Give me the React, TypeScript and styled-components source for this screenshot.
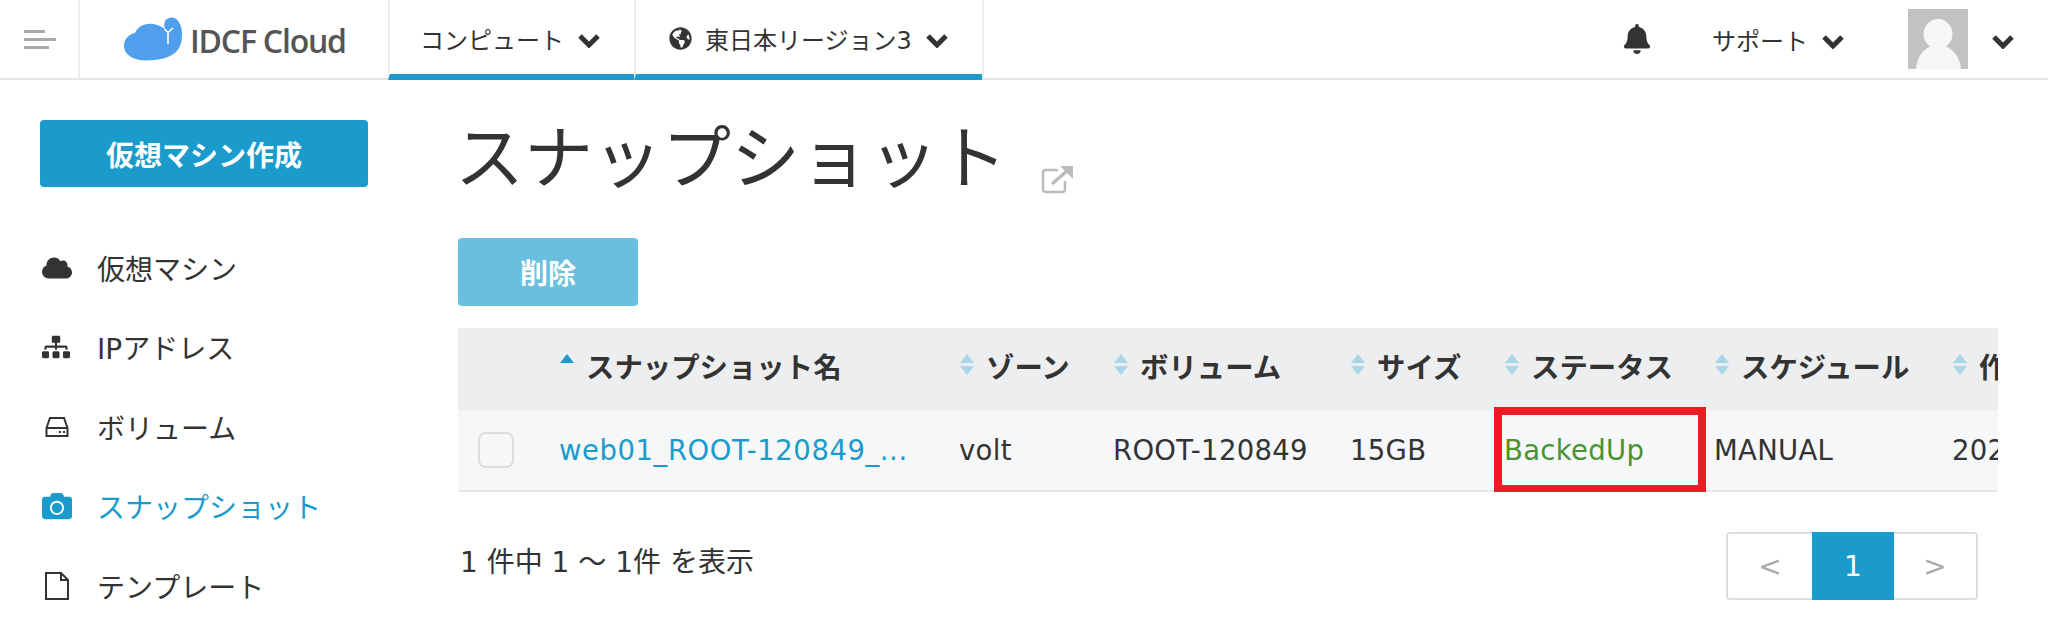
import React from "react";
import styled, { createGlobalStyle } from "styled-components";
import { FaBell, FaCamera, FaCloud, FaGlobeAmericas, FaSitemap } from "react-icons/fa";

const FONT = `"DejaVu Sans", "Noto Sans CJK JP", sans-serif`;
const BLUE = "#1a9bcb";
const COLS = "87px 400px 154px 237px 154px 210px 238px 200px";

const Global = createGlobalStyle`
  html, body { margin: 0; padding: 0; background: #fff; }
  body { font-family: ${FONT}; color: #333; width: 2048px; height: 630px; overflow: hidden; }
  * { box-sizing: border-box; }
`;

const Header = styled.header`
  display: flex;
  align-items: stretch;
  height: 80px;
  border-bottom: 2px solid #e6e6e6;
`;
const MenuCell = styled.div`
  width: 80px;
  border-right: 2px solid #eee;
  display: flex;
  flex-direction: column;
  justify-content: center;
  gap: 5px;
  padding-left: 24px;
`;
const MenuLine = styled.span<{ $w: number }>`
  display: block;
  height: 3px;
  width: ${(p) => p.$w}px;
  background: #aaa;
`;
const LogoCell = styled.div`
  width: 308px;
  display: flex;
  align-items: center;
  padding-left: 44px;
  gap: 8px;
`;
const LogoText = styled.span`
  font-family: "Open Sans", sans-serif;
  font-size: 32px;
  font-weight: 600;
  letter-spacing: -1.2px;
  color: #555;
  margin-top: 2px;
`;
const Tab = styled.div<{ $w: number; $pad: number }>`
  width: ${(p) => p.$w}px;
  height: 80px;
  border-left: 2px solid #eee;
  border-bottom: 6px solid ${BLUE};
  display: flex;
  align-items: center;
  padding-left: ${(p) => p.$pad}px;
  padding-top: 2px;
  font-size: 24px;
  gap: 13px;
`;
const Spacer = styled.div`
  flex: 1;
  border-left: 2px solid #eee;
`;
const RightCluster = styled.div`
  display: flex;
  align-items: center;
  padding-right: 33px;
  font-size: 24px;
`;
const Support = styled.div`
  display: flex;
  align-items: center;
  gap: 13px;
  margin-left: 60px;
`;
const Avatar = styled.svg`
  width: 60px;
  height: 60px;
  margin-left: 63px;
  margin-right: 23px;
  display: block;
`;
const ChevronSvg = styled.svg`
  width: 24px;
  height: 15px;
  flex: none;
  margin-top: 5px;
`;

const Body = styled.div`
  display: flex;
`;
const Sidebar = styled.aside`
  width: 458px;
  flex: none;
  padding: 40px 0 0 40px;
`;
const CreateButton = styled.div`
  width: 328px;
  height: 67px;
  background: ${BLUE};
  border-radius: 4px;
  color: #fff;
  font-weight: 700;
  font-size: 28px;
  display: flex;
  align-items: center;
  justify-content: center;
`;
const Nav = styled.nav`
  margin-top: 41px;
`;
const NavItem = styled.div<{ $active?: boolean }>`
  height: 79.5px;
  display: flex;
  align-items: center;
  font-size: 28px;
  color: ${(p) => (p.$active ? BLUE : "#333")};
`;
const NavIcon = styled.span`
  width: 57px;
  padding-left: 2px;
  display: flex;
  font-size: 30px;
`;
const LineIcon = styled.svg`
  margin-left: 3px;
  display: block;
`;

const Main = styled.main`
  width: 1540px;
`;
const TitleRow = styled.div`
  height: 158px;
  display: flex;
  align-items: flex-start;
`;
const Title = styled.h1`
  margin: 33px 0 0 -3px;
  font-size: 69px;
  line-height: 92px;
  font-weight: 400;
`;
const TitleLink = styled.svg`
  display: block;
  width: 32px;
  height: 28px;
  margin: 86px 0 0 34px;
`;
const DeleteButton = styled.div`
  width: 180px;
  height: 68px;
  background: #6abede;
  border-radius: 4px;
  color: #fff;
  font-weight: 700;
  font-size: 28px;
  display: flex;
  align-items: center;
  justify-content: center;
`;
const TableWrap = styled.div`
  position: relative;
  margin-top: 22px;
  overflow: hidden;
`;
const Row = styled.div`
  display: grid;
  grid-template-columns: ${COLS};
  width: 100%;
  height: 82px;
`;
const HeadRow = styled(Row)`
  background: #edeef0;
  padding-bottom: 8px;
`;
const BodyRow = styled(Row)`
  background: #f6f7f9;
  border-bottom: 2px solid #e8e8e8;
`;
const HeadCell = styled.div`
  display: flex;
  align-items: center;
  gap: 11px;
  padding-left: 15px;
  font-size: 28.4px;
  font-weight: 700;
  white-space: nowrap;
`;
const Cell = styled.div<{ $color?: string; $spacing?: number }>`
  display: flex;
  align-items: center;
  padding-left: 14px;
  font-size: 27.5px;
  letter-spacing: ${(p) => p.$spacing ?? 0.3}px;
  white-space: nowrap;
  color: ${(p) => p.$color ?? "#333"};
`;
const CheckCell = styled.div`
  display: flex;
  align-items: center;
  padding-left: 20px;
`;
const Check = styled.span`
  width: 36px;
  height: 36px;
  border: 2px solid #ddd;
  border-radius: 8px;
`;
const SortIcon = styled.span`
  display: flex;
  flex-direction: column;
  gap: 3px;
  flex: none;
  width: 15px;
  margin-top: -2px;
`;
const Tri = styled.span<{ $up?: boolean; $color: string; $hide?: boolean }>`
  width: 0;
  height: 0;
  border-left: 7.5px solid transparent;
  border-right: 7.5px solid transparent;
  ${(p) =>
    p.$up
      ? `border-bottom: 9px solid ${p.$color};`
      : `border-top: 9px solid ${p.$hide ? "transparent" : p.$color};`}
`;
const Highlight = styled.div`
  position: absolute;
  left: 1036px;
  top: 79px;
  width: 212px;
  height: 86px;
  border: 8px solid #ed1c24;
`;
const Footer = styled.div`
  display: flex;
  justify-content: space-between;
  align-items: flex-start;
  margin-top: 40px;
  padding: 0 20px 0 2px;
`;
const FooterText = styled.span`
  font-size: 28px;
  line-height: 62px;
`;
const Pager = styled.div`
  display: flex;
  height: 68px;
  border: 2px solid #ddd;
  border-radius: 4px;
  width: 252px;
`;
const PageBtn = styled.div<{ $active?: boolean; $w: number }>`
  width: ${(p) => p.$w}px;
  margin: ${(p) => (p.$active ? "-2px 0" : "0")};
  background: ${(p) => (p.$active ? BLUE : "transparent")};
  color: ${(p) => (p.$active ? "#fff" : "#aaa")};
  display: flex;
  align-items: center;
  justify-content: center;
  font-size: 28px;
`;

const Chevron = () => (
  <ChevronSvg viewBox="0 0 24 15">
    <path d="M3 3L12 12L21 3" stroke="#333" strokeWidth="5" fill="none" />
  </ChevronSvg>
);

const Logo = () => (
  <svg width="58" height="44" viewBox="0 0 58 44">
    <path
      d="M22 43.5C10 43.5 0 38 0 29C0 22 5 17 11 16C14 9 22 6 29 7C34 7.5 38 10 41 12C39 6 41 1 47 0.5C54 0 58 8 58 17C58 30 54 43 22 43.5Z"
      fill="#4f9fec"
    />
    <path d="M40.5 12L44 15.5L44 27M49 11L44 15.5" stroke="#fff" strokeWidth="1.6" fill="none" />
  </svg>
);

const sortHeads = [
  ["スナップショット名", true],
  ["ゾーン", false],
  ["ボリューム", false],
  ["サイズ", false],
  ["ステータス", false],
  ["スケジュール", false],
  ["作成日", false],
] as const;

export default function App() {
  return (
    <>
      <Global />
      <Header>
        <MenuCell>
          <MenuLine $w={21} />
          <MenuLine $w={32} />
          <MenuLine $w={25} />
        </MenuCell>
        <LogoCell>
          <Logo />
          <LogoText>IDCF Cloud</LogoText>
        </LogoCell>
        <Tab $w={246} $pad={30}>
          コンピュート <Chevron />
        </Tab>
        <Tab $w={348} $pad={33}>
          <FaGlobeAmericas size={23} />
          東日本リージョン3 <Chevron />
        </Tab>
        <Spacer />
        <RightCluster>
          <FaBell size={30} />
          <Support>
            サポート <Chevron />
          </Support>
          <Avatar viewBox="0 0 60 60">
            <rect width="60" height="60" fill="#c2c2c2" />
            <ellipse cx="30" cy="25" rx="14.5" ry="15" fill="#f6f6f6" />
            <path d="M8 60C9 46 18 36 30 36C42 36 52 46 53 60Z" fill="#f6f6f6" />
          </Avatar>
          <Chevron />
        </RightCluster>
      </Header>
      <Body>
        <Sidebar>
          <CreateButton>仮想マシン作成</CreateButton>
          <Nav>
            <NavItem>
              <NavIcon><FaCloud /></NavIcon>仮想マシン
            </NavItem>
            <NavItem>
              <NavIcon><FaSitemap size={28} /></NavIcon>IPアドレス
            </NavItem>
            <NavItem>
              <NavIcon>
                <LineIcon width="24" height="22" viewBox="0 0 24 22" fill="none" stroke="#333" strokeWidth="2">
                  <path d="M1.5 12L5 2H19L22.5 12V20H1.5Z" />
                  <path d="M1.5 12H22.5" />
                  <path d="M14 16H16M18 16H20" strokeWidth="2" />
                </LineIcon>
              </NavIcon>
              ボリューム
            </NavItem>
            <NavItem $active>
              <NavIcon><FaCamera /></NavIcon>スナップショット
            </NavItem>
            <NavItem>
              <NavIcon>
                <LineIcon width="24" height="28" viewBox="0 0 24 28" fill="none" stroke="#333" strokeWidth="2">
                  <path d="M1 1H16L23 8V27H1Z" />
                  <path d="M16 1V8H23" />
                </LineIcon>
              </NavIcon>
              テンプレート
            </NavItem>
          </Nav>
        </Sidebar>
        <Main>
          <TitleRow>
            <Title>スナップショット</Title>
            <TitleLink viewBox="0 0 32 28">
              <path d="M17 4H5Q2 4 2 7V23Q2 26 5 26H21Q24 26 24 23V15" fill="none" stroke="#bbb" strokeWidth="2.5" />
              <path d="M11 18L27 4" fill="none" stroke="#bbb" strokeWidth="3.5" />
              <path d="M19 0H32V13Z" fill="#bbb" />
            </TitleLink>
          </TitleRow>
          <DeleteButton>削除</DeleteButton>
          <TableWrap>
            <HeadRow>
              <div />
              {sortHeads.map(([label, active]) => (
                <HeadCell key={label}>
                  <SortIcon>
                    <Tri $up $color={active ? BLUE : "#a9d6e8"} />
                    <Tri $color="#a9d6e8" $hide={active} />
                  </SortIcon>
                  {label}
                </HeadCell>
              ))}
            </HeadRow>
            <BodyRow>
              <CheckCell><Check /></CheckCell>
              <Cell $color={BLUE} $spacing={0.55}>web01_ROOT-120849_...</Cell>
              <Cell>volt</Cell>
              <Cell>ROOT-120849</Cell>
              <Cell>15GB</Cell>
              <Cell $color="#4a9232">BackedUp</Cell>
              <Cell>MANUAL</Cell>
              <Cell>2021-01-01</Cell>
            </BodyRow>
            <Highlight />
          </TableWrap>
          <Footer>
            <FooterText>1 件中 1 ～ 1件 を表示</FooterText>
            <Pager>
              <PageBtn $w={84}>&lt;</PageBtn>
              <PageBtn $w={82} $active>1</PageBtn>
              <PageBtn $w={82}>&gt;</PageBtn>
            </Pager>
          </Footer>
        </Main>
      </Body>
    </>
  );
}
